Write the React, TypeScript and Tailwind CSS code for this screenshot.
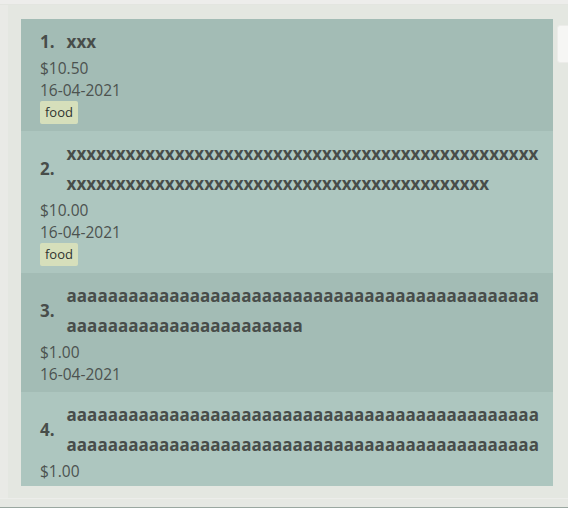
const items = [
    { idx: "1.", name: "xxx", price: "$10.50", date: "16-04-2021", tags: ["food"] },
    { idx: "2.", name: "x".repeat(91), price: "$10.00", date: "16-04-2021", tags: ["food"] },
    { idx: "3.", name: "a".repeat(69), price: "$1.00", date: "16-04-2021", tags: [] },
    { idx: "4.", name: "a".repeat(92), price: "$1.00", date: "16-04-2021", tags: [] },
];

const App = () => {
    return (
        <div className="relative w-[568px] h-[508px] overflow-hidden bg-[#e9eae6] font-['Open_Sans',sans-serif]">
            {/* top strip */}
            <div className="h-[5px] bg-[#ededeb] border-b border-[#e3e5e0]" />

            <div className="ml-[8px] h-[493px] bg-[#e4e7e1] pt-[14px] pl-[13px]">
                <div className="w-[532px] h-[467px] overflow-hidden">
                    {items.map((item, i) => (
                        <div
                            key={i}
                            className={`pl-[19px] pt-[8px] pb-[7px] ${i % 2 === 0 ? "bg-[#a3bcb5]" : "bg-[#adc6bf]"}`}
                        >
                            <div className="flex items-center gap-[12px] text-[17px] font-bold text-[#484d4a] leading-[30px]">
                                <span>{item.idx}</span>
                                <span className="flex-1 min-w-0 break-all pr-[12px]">{item.name}</span>
                            </div>
                            <div className="text-[15.5px] leading-[22px] text-[#4c524f]">{item.price}</div>
                            <div className="text-[15.5px] leading-[22px] text-[#4c524f]">{item.date}</div>
                            {item.tags.length > 0 && (
                                <div className="flex gap-1">
                                    {item.tags.map((t) => (
                                        <span key={t} className="h-[23px] px-[5px] rounded-[2px] bg-[#d6dfbb] text-[13px] leading-[23px] text-[#2f3330]">
                                            {t}
                                        </span>
                                    ))}
                                </div>
                            )}
                        </div>
                    ))}
                </div>
            </div>

            {/* bottom edge */}
            <div className="h-[9px] bg-[#e6e8e3] border-t border-[#ecedea]" />
            <div className="h-px bg-[#9aa7a0]" />

            {/* small panel at right edge */}
            <div className="absolute left-[557px] top-[25px] w-[20px] h-[38px] rounded-[3px] bg-[#f6f6f4] border border-[#ecece9]" />
        </div>
    );
};

export default App;
